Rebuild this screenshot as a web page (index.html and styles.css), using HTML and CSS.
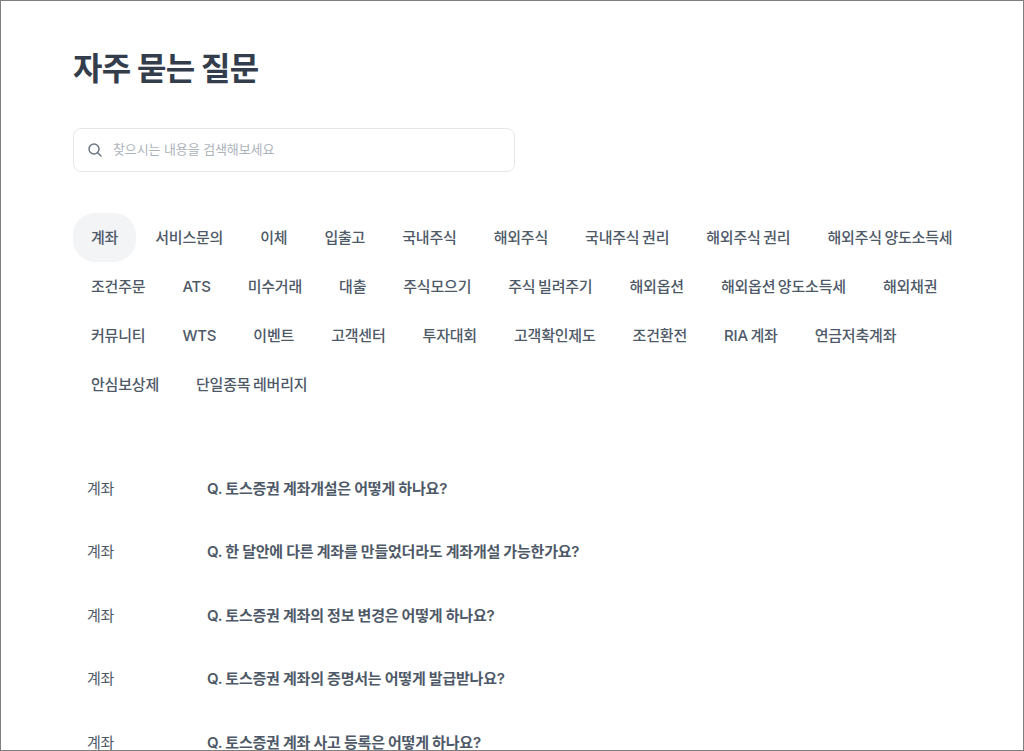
FILE: index.html
```html
<!DOCTYPE html>
<html lang="ko">
<head>
  <meta charset="UTF-8">
  <title>자주 묻는 질문</title>
  <link rel="stylesheet" href="styles.css">
</head>
<body>
  <div class="page">
    <h1 class="page-title">자주 묻는 질문</h1>

    <div class="search-box">
      <svg class="search-icon" width="16" height="16" viewBox="0 0 16 16" fill="none">
        <circle cx="7" cy="7" r="5" stroke="#6b7684" stroke-width="1.5"/>
        <path d="M10.7 10.7l3.3 3.3" stroke="#6b7684" stroke-width="1.5" stroke-linecap="round"/>
      </svg>
      <span class="search-placeholder">찾으시는 내용을 검색해보세요</span>
    </div>

    <div class="category-list">
      <span class="chip chip-active">계좌</span>
      <span class="chip">서비스문의</span>
      <span class="chip">이체</span>
      <span class="chip">입출고</span>
      <span class="chip">국내주식</span>
      <span class="chip">해외주식</span>
      <span class="chip">국내주식 권리</span>
      <span class="chip">해외주식 권리</span>
      <span class="chip">해외주식 양도소득세</span>
      <span class="chip">조건주문</span>
      <span class="chip">ATS</span>
      <span class="chip">미수거래</span>
      <span class="chip">대출</span>
      <span class="chip">주식모으기</span>
      <span class="chip">주식 빌려주기</span>
      <span class="chip">해외옵션</span>
      <span class="chip">해외옵션 양도소득세</span>
      <span class="chip">해외채권</span>
      <span class="chip">커뮤니티</span>
      <span class="chip">WTS</span>
      <span class="chip">이벤트</span>
      <span class="chip">고객센터</span>
      <span class="chip">투자대회</span>
      <span class="chip">고객확인제도</span>
      <span class="chip">조건환전</span>
      <span class="chip">RIA 계좌</span>
      <span class="chip">연금저축계좌</span>
      <span class="chip">안심보상제</span>
      <span class="chip">단일종목 레버리지</span>
    </div>

    <div class="faq-list">
      <div class="faq-row">
        <span class="faq-category">계좌</span>
        <span class="faq-question">Q. 토스증권 계좌개설은 어떻게 하나요?</span>
      </div>
      <div class="faq-row">
        <span class="faq-category">계좌</span>
        <span class="faq-question">Q. 한 달안에 다른 계좌를 만들었더라도 계좌개설 가능한가요?</span>
      </div>
      <div class="faq-row">
        <span class="faq-category">계좌</span>
        <span class="faq-question">Q. 토스증권 계좌의 정보 변경은 어떻게 하나요?</span>
      </div>
      <div class="faq-row">
        <span class="faq-category">계좌</span>
        <span class="faq-question">Q. 토스증권 계좌의 증명서는 어떻게 발급받나요?</span>
      </div>
      <div class="faq-row">
        <span class="faq-category">계좌</span>
        <span class="faq-question">Q. 토스증권 계좌 사고 등록은 어떻게 하나요?</span>
      </div>
    </div>
  </div>
</body>
</html>
```

FILE: styles.css
```css
html, body {
  margin: 0;
  height: 751px;
  overflow: hidden;
}

body {
  font-family: Inter, "Noto Sans CJK KR", sans-serif;
  background-color: #fff;
  color: #4e5968;
}

.page {
  box-sizing: border-box;
  height: 751px;
  overflow: hidden;
  border: 1px solid #7f7f7f;
  padding: 44px 40px 0 72px;
}

.page-title {
  margin: 0;
  font-size: 32px;
  line-height: 48px;
  font-weight: 700;
  letter-spacing: -0.8px;
  color: #333d4b;
}

.search-box {
  display: flex;
  align-items: center;
  gap: 10px;
  box-sizing: border-box;
  width: 442px;
  height: 44px;
  margin-top: 35px;
  padding: 0 13px;
  border: 1px solid #e5e8eb;
  border-radius: 8px;
}

.search-icon {
  flex-shrink: 0;
}

.search-placeholder {
  margin-bottom: 2px;
  font-size: 13px;
  line-height: 40px;
  letter-spacing: -0.1px;
  color: #adb3ba;
}

.category-list {
  display: flex;
  flex-wrap: wrap;
  column-gap: 1px;
  margin-top: 41px;
}

.chip {
  height: 49px;
  padding: 0 18px;
  border-radius: 22px;
  font-size: 15px;
  line-height: 50px;
  letter-spacing: -0.2px;
  word-spacing: -1.2px;
  font-weight: 500;
  white-space: nowrap;
}

.chip-active {
  background-color: #f2f4f6;
}

.faq-list {
  margin-top: 46.5px;
}

.faq-row {
  display: flex;
  align-items: center;
  height: 63.5px;
  padding-left: 14px;
  font-size: 15px;
  letter-spacing: -0.2px;
  word-spacing: -0.3px;
}

.faq-category {
  width: 120px;
  flex-shrink: 0;
}

.faq-question {
  font-weight: 600;
}
```
